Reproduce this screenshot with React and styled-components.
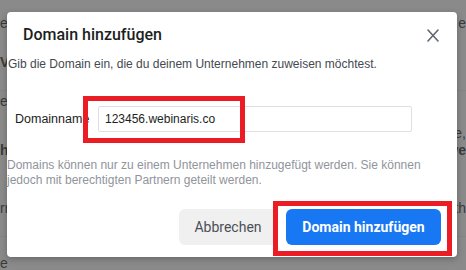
import React from "react";
import styled, { createGlobalStyle } from "styled-components";

const GlobalStyle = createGlobalStyle`
  html, body {
    margin: 0;
    padding: 0;
  }
  body {
    width: 466px;
    height: 270px;
    overflow: hidden;
    background: #898989;
    font-family: "Liberation Sans", Arial, sans-serif;
  }
`;

const Page = styled.div`
  position: relative;
  width: 466px;
  height: 270px;
  overflow: hidden;
  background: #8a8a8a;
`;

const Backdrop = styled.div`
  display: flex;
  flex-direction: column;
  width: 100%;
  height: 100%;
`;

const BackRow = styled.div`
  display: flex;
  justify-content: space-between;
  align-items: center;
  height: ${(props) => props.h}px;
  border-bottom: ${(props) => (props.line ? "1px solid #848484" : "none")};
  font-size: 14px;
  line-height: 16px;
  color: #3a3a3a;
  font-weight: ${(props) => (props.bold ? 700 : 400)};
`;

const BackText = styled.span`
  white-space: nowrap;
`;

const Dialog = styled.div`
  position: absolute;
  left: 7px;
  top: 12px;
  width: 450px;
  height: 245px;
  box-sizing: border-box;
  background: #ffffff;
  border-radius: 4px;
  box-shadow: 0 2px 6px rgba(0, 0, 0, 0.25);
  display: flex;
  flex-direction: column;
`;

const Header = styled.div`
  display: flex;
  align-items: center;
  justify-content: space-between;
  padding: 13px 18px 0 16px;
  height: 20px;
`;

const Title = styled.h2`
  margin: 0;
  font-family: Roboto, "Liberation Sans", sans-serif;
  font-size: 16px;
  line-height: 20px;
  font-weight: 500;
  color: #1c1e21;
`;

const CloseButton = styled.button`
  border: none;
  background: none;
  padding: 0;
  width: 12px;
  height: 13px;
  display: flex;
  cursor: pointer;
`;

const Subtitle = styled.p`
  margin: 10px 0 0 1px;
  font-size: 12px;
  line-height: 18px;
  color: #444950;
`;

const FieldRow = styled.div`
  display: flex;
  align-items: center;
  margin-top: 33px;
  padding-left: 8px;
`;

const Label = styled.label`
  width: 83px;
  flex-shrink: 0;
  font-size: 12.5px;
  color: #1c1e21;
`;

const InputWrap = styled.div`
  position: relative;
  width: 314px;
  height: 26px;
`;

const Input = styled.input`
  box-sizing: border-box;
  width: 100%;
  height: 100%;
  border: 1px solid #dddfe2;
  border-radius: 2px;
  padding: 0 6px;
  font-family: "Liberation Sans", Arial, sans-serif;
  font-size: 12px;
  color: #1c1e21;
  outline: none;
`;

const Highlight = styled.div`
  position: absolute;
  box-sizing: border-box;
  left: ${(props) => props.l}px;
  top: ${(props) => props.t}px;
  width: ${(props) => props.w}px;
  height: ${(props) => props.hgt}px;
  border: 5px solid #ec1c24;
  pointer-events: none;
`;

const Help = styled.p`
  margin: 26px 0 0 0;
  font-size: 12px;
  line-height: 15px;
  color: #90949c;
`;

const Footer = styled.div`
  display: flex;
  justify-content: flex-end;
  gap: 9px;
  margin-top: 21px;
  padding-right: 16px;
`;

const Button = styled.button`
  position: relative;
  box-sizing: border-box;
  height: 36px;
  width: ${(props) => props.w}px;
  border: none;
  border-radius: 6px;
  font-family: Roboto, "Liberation Sans", sans-serif;
  font-size: 14px;
  font-weight: ${(props) => (props.primary ? 700 : 400)};
  background: ${(props) => (props.primary ? "#1877f2" : "#f0f0f1")};
  color: ${(props) => (props.primary ? "#ffffff" : "#4b4f56")};
  padding: 0;
  cursor: pointer;
`;

const backRows = [
  { h: 16 },
  { h: 18, left: "e", right: "e" },
  { h: 22 },
  { h: 20, left: "V", bold: true },
  { h: 20, line: true },
  { h: 22, left: "er" },
  { h: 14 },
  { h: 16, right: "e," },
  { h: 20, left: "h", right: "we", bold: true },
  { h: 40 },
  { h: 24, left: "rr", right: "th" },
  { h: 18, line: true },
  { h: 20 },
  { h: 14, left: "e" },
];

const App = () => {
  return (
    <>
      <GlobalStyle />
      <Page>
        <Backdrop>
          {backRows.map((r, i) => (
            <BackRow key={i} h={r.h} line={r.line} bold={r.bold}>
              <BackText>{r.left || ""}</BackText>
              <BackText>{r.right || ""}</BackText>
            </BackRow>
          ))}
        </Backdrop>
        <Dialog>
          <Header>
            <Title>Domain hinzufügen</Title>
            <CloseButton aria-label="Schließen">
              <svg width="12" height="13" viewBox="0 0 12 13">
                <path
                  d="M1 1 L11 12 M11 1 L1 12"
                  stroke="#606770"
                  strokeWidth="1.6"
                  strokeLinecap="round"
                />
              </svg>
            </CloseButton>
          </Header>
          <Subtitle>
            Gib die Domain ein, die du deinem Unternehmen zuweisen möchtest.
          </Subtitle>
          <FieldRow>
            <Label>Domainname</Label>
            <InputWrap>
              <Input defaultValue="123456.webinaris.co" />
              <Highlight l={-15} t={-10} w={162} hgt={47} />
            </InputWrap>
          </FieldRow>
          <Help>
            Domains können nur zu einem Unternehmen hinzugefügt werden. Sie
            können jedoch mit berechtigten Partnern geteilt werden.
          </Help>
          <Footer>
            <Button w={98}>Abbrechen</Button>
            <Button primary w={155}>
              Domain hinzufügen
              <Highlight l={-13} t={-8} w={179} hgt={55} />
            </Button>
          </Footer>
        </Dialog>
      </Page>
    </>
  );
};

export default App;
